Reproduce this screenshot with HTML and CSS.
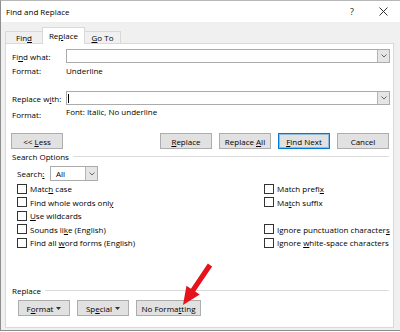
FILE: index.html
```html
<!DOCTYPE html>
<html>
<head>
<meta charset="utf-8">
<title>Find and Replace</title>
<link rel="stylesheet" href="styles.css">
</head>
<body>
<div class="window">
  <div class="titlebar">
    <span class="title">Find and Replace</span>
    <span class="help">?</span>
    <span class="close"><svg width="9" height="9" viewBox="0 0 9 9"><path d="M0.5 0.5L8.5 8.5M8.5 0.5L0.5 8.5" stroke="#333" stroke-width="1" fill="none"/></svg></span>
  </div>
  <div class="tabs">
    <div class="tab tab-find"><span>Fin<u>d</u></span></div>
    <div class="tab tab-active"><span>Re<u>p</u>lace</span></div>
    <div class="tab tab-goto"><span><u>G</u>o To</span></div>
  </div>
  <div class="panel">
    <div class="field-row row-find">
      <span class="label">Fi<u>n</u>d what:</span>
      <div class="combo"><span class="combo-text"></span><span class="combo-btn"><svg width="6" height="4" viewBox="0 0 6 4"><polyline points="0.5,0.5 3,3 5.5,0.5" fill="none" stroke="#666" stroke-width="1"/></svg></span></div>
    </div>
    <div class="format-row">
      <span class="label">Format:</span>
      <span class="value">Underline</span>
    </div>
    <div class="field-row row-replace">
      <span class="label">Replace w<u>i</u>th:</span>
      <div class="combo"><span class="combo-text"><span class="caret"></span></span><span class="combo-btn"><svg width="6" height="4" viewBox="0 0 6 4"><polyline points="0.5,0.5 3,3 5.5,0.5" fill="none" stroke="#666" stroke-width="1"/></svg></span></div>
    </div>
    <div class="format-row format-row2">
      <span class="label">Format:</span>
      <span class="value">Font: Italic, No underline</span>
    </div>
    <div class="button-row">
      <button class="btn btn-less"><span>&lt;&lt; <u>L</u>ess</span></button>
      <div class="btn-group">
        <button class="btn"><span><u>R</u>eplace</span></button>
        <button class="btn"><span>Replace <u>A</u>ll</span></button>
        <button class="btn btn-default"><span><u>F</u>ind Next</span></button>
        <button class="btn"><span>Cancel</span></button>
      </div>
    </div>
    <div class="legend legend-options"><span>Search Options</span></div>
    <div class="search-row">
      <span class="search-label">Search<u>:</u></span>
      <div class="select"><span class="select-text">All</span><span class="select-btn"><svg width="6" height="4" viewBox="0 0 6 4"><polyline points="0.5,0.5 3,3 5.5,0.5" fill="none" stroke="#666" stroke-width="1"/></svg></span></div>
    </div>
    <div class="checks">
      <div class="cb"><span class="box"></span><span>Matc<u>h</u> case</span></div>
      <div class="cb"><span class="box"></span><span>Match prefi<u>x</u></span></div>
      <div class="cb"><span class="box"></span><span>Find whole words onl<u>y</u></span></div>
      <div class="cb"><span class="box"></span><span>Ma<u>t</u>ch suffix</span></div>
      <div class="cb"><span class="box"></span><span><u>U</u>se wildcards</span></div>
      <div class="cb"></div>
      <div class="cb"><span class="box"></span><span>Sounds li<u>k</u>e (English)</span></div>
      <div class="cb"><span class="box"></span><span>Ignore punctuation character<u>s</u></span></div>
      <div class="cb"><span class="box"></span><span>Find all <u>w</u>ord forms (English)</span></div>
      <div class="cb"><span class="box"></span><span>Ignore <u>w</u>hite-space characters</span></div>
    </div>
    <div class="legend legend-replace"><span>Replace</span></div>
    <div class="bottom-row">
      <button class="btn"><span>F<u>o</u>rmat</span><svg class="tri" width="5" height="3" viewBox="0 0 5 3"><polygon points="0,0 5,0 2.5,3" fill="#333"/></svg></button>
      <button class="btn"><span>Sp<u>e</u>cial</span><svg class="tri" width="5" height="3" viewBox="0 0 5 3"><polygon points="0,0 5,0 2.5,3" fill="#333"/></svg></button>
      <button class="btn btn-wide"><span>No Forma<u>t</u>ting</span></button>
    </div>
  </div>
  <svg class="arrow" width="40" height="46" viewBox="0 0 40 46"><polygon points="37.15,4.45 20.21,29.55 24.68,32.57 8,43 11.44,23.63 15.91,26.65 32.85,1.55" fill="#e5141c"/></svg>
</div>
</body>
</html>
```
FILE: styles.css
```css
body {
  margin: 0;
  background: #fff;
  font-family: "Open Sans", "Noto Sans", sans-serif;
  font-size: 8px;
  color: #000;
}

u {
  text-decoration-thickness: 1px;
  text-underline-offset: 1px;
}

.window {
  position: relative;
  width: 400px;
  height: 331px;
  box-sizing: border-box;
  border: 1px solid #8e8e8e;
  border-top-color: #b8b8b8;
  border-right: 0;
  background: #f0f0f0;
  display: flex;
  flex-direction: column;
}

.titlebar {
  height: 21px;
  background: #fff;
  display: flex;
  align-items: center;
  padding-left: 5px;
  flex: none;
}

.title {
  flex: 1;
}

.help {
  width: 8px;
  text-align: center;
  font-size: 9px;
  color: #222;
  margin-right: 23px;
}

.close {
  display: flex;
  margin-right: 12px;
}

.tabs {
  height: 21px;
  flex: none;
  display: flex;
  align-items: flex-end;
  padding-left: 4px;
}

.tab {
  box-sizing: border-box;
  height: 12px;
  border: 1px solid #d9d9d9;
  border-bottom: 0;
  background: #f0f0f0;
  display: flex;
  align-items: center;
  justify-content: center;
}

.tab-find {
  width: 37px;
  border-right: 0;
}

.tab-active {
  position: relative;
  z-index: 1;
  width: 43px;
  height: 17px;
  margin-bottom: -1px;
  background: #fff;
  padding-bottom: 1px;
}

.tab-goto {
  width: 36px;
  border-left: 0;
}

.panel {
  flex: 1;
  margin: 0 6px 2px 4px;
  background: #fff;
  border: 1px solid #d9d9d9;
  padding: 0 3px 0 6px;
  display: flex;
  flex-direction: column;
}

.field-row,
.format-row {
  display: grid;
  grid-template-columns: 54px 1fr;
  align-items: center;
}

.row-find {
  margin-top: 5px;
}

.row-replace {
  margin-top: 14px;
}

.combo {
  height: 14px;
  box-sizing: border-box;
  border: 1px solid #ababab;
  display: flex;
}

.combo-text {
  flex: 1;
  display: flex;
  align-items: center;
}

.caret {
  width: 1px;
  height: 9px;
  background: #000;
  margin-left: 1px;
}

.combo-btn {
  width: 12px;
  box-sizing: border-box;
  background: #e5e5e5;
  border-left: 1px solid #b4b4b4;
  display: flex;
  align-items: center;
  justify-content: center;
}

.format-row {
  height: 14px;
}

.format-row2 {
  height: 17px;
  align-items: start;
}

.format-row2 .label {
  padding-top: 4px;
  line-height: 12px;
}

.format-row2 .value {
  line-height: 14px;
}

.button-row {
  margin-top: 11px;
  display: flex;
  padding-right: 1px;
}

.btn {
  box-sizing: border-box;
  width: 52px;
  height: 16px;
  padding: 0;
  border: 1px solid #adadad;
  background: #e1e1e1;
  font-family: inherit;
  font-size: 8px;
  color: #000;
  display: flex;
  align-items: center;
  justify-content: center;
  white-space: pre;
}

.btn-less {
  margin-left: -1px;
}

.btn-group {
  margin-left: auto;
  display: flex;
  gap: 7px;
}

.btn-default {
  border-color: #0078d7;
  box-shadow: inset 0 0 0 1px rgba(0, 120, 215, 0.35);
}

.legend {
  display: flex;
  align-items: center;
  height: 12px;
  padding-right: 1px;
}

.legend::after {
  content: "";
  flex: 1;
  height: 1px;
  background: #dcdcdc;
  margin-left: 4px;
}

.legend-options {
  margin-top: 1px;
}

.search-row {
  margin-top: 4px;
  height: 15px;
  display: flex;
  align-items: center;
  padding-left: 5px;
}

.search-label {
  width: 33px;
}

.select {
  width: 48px;
  height: 15px;
  box-sizing: border-box;
  border: 1px solid #ababab;
  display: flex;
}

.select-text {
  flex: 1;
  display: flex;
  align-items: center;
  padding-left: 5px;
}

.select-btn {
  width: 12px;
  box-sizing: border-box;
  background: #e5e5e5;
  border-left: 1px solid #b4b4b4;
  display: flex;
  align-items: center;
  justify-content: center;
}

.checks {
  margin-top: 1px;
  display: grid;
  grid-template-columns: 247px 1fr;
  grid-auto-rows: 13.5px;
  padding-left: 5px;
}

.cb {
  display: flex;
  align-items: center;
  white-space: nowrap;
}

.box {
  width: 10px;
  height: 10px;
  box-sizing: border-box;
  border: 1px solid #333;
  background: #fff;
  margin-right: 3px;
  flex: none;
}

.legend-replace {
  margin-top: 34.5px;
}

.bottom-row {
  margin-top: 4px;
  display: flex;
  gap: 7px;
  padding-left: 6px;
}

.btn-wide {
  width: 65px;
}

.tri {
  margin-left: 3px;
}

.arrow {
  position: absolute;
  left: 174px;
  top: 261px;
}
```
